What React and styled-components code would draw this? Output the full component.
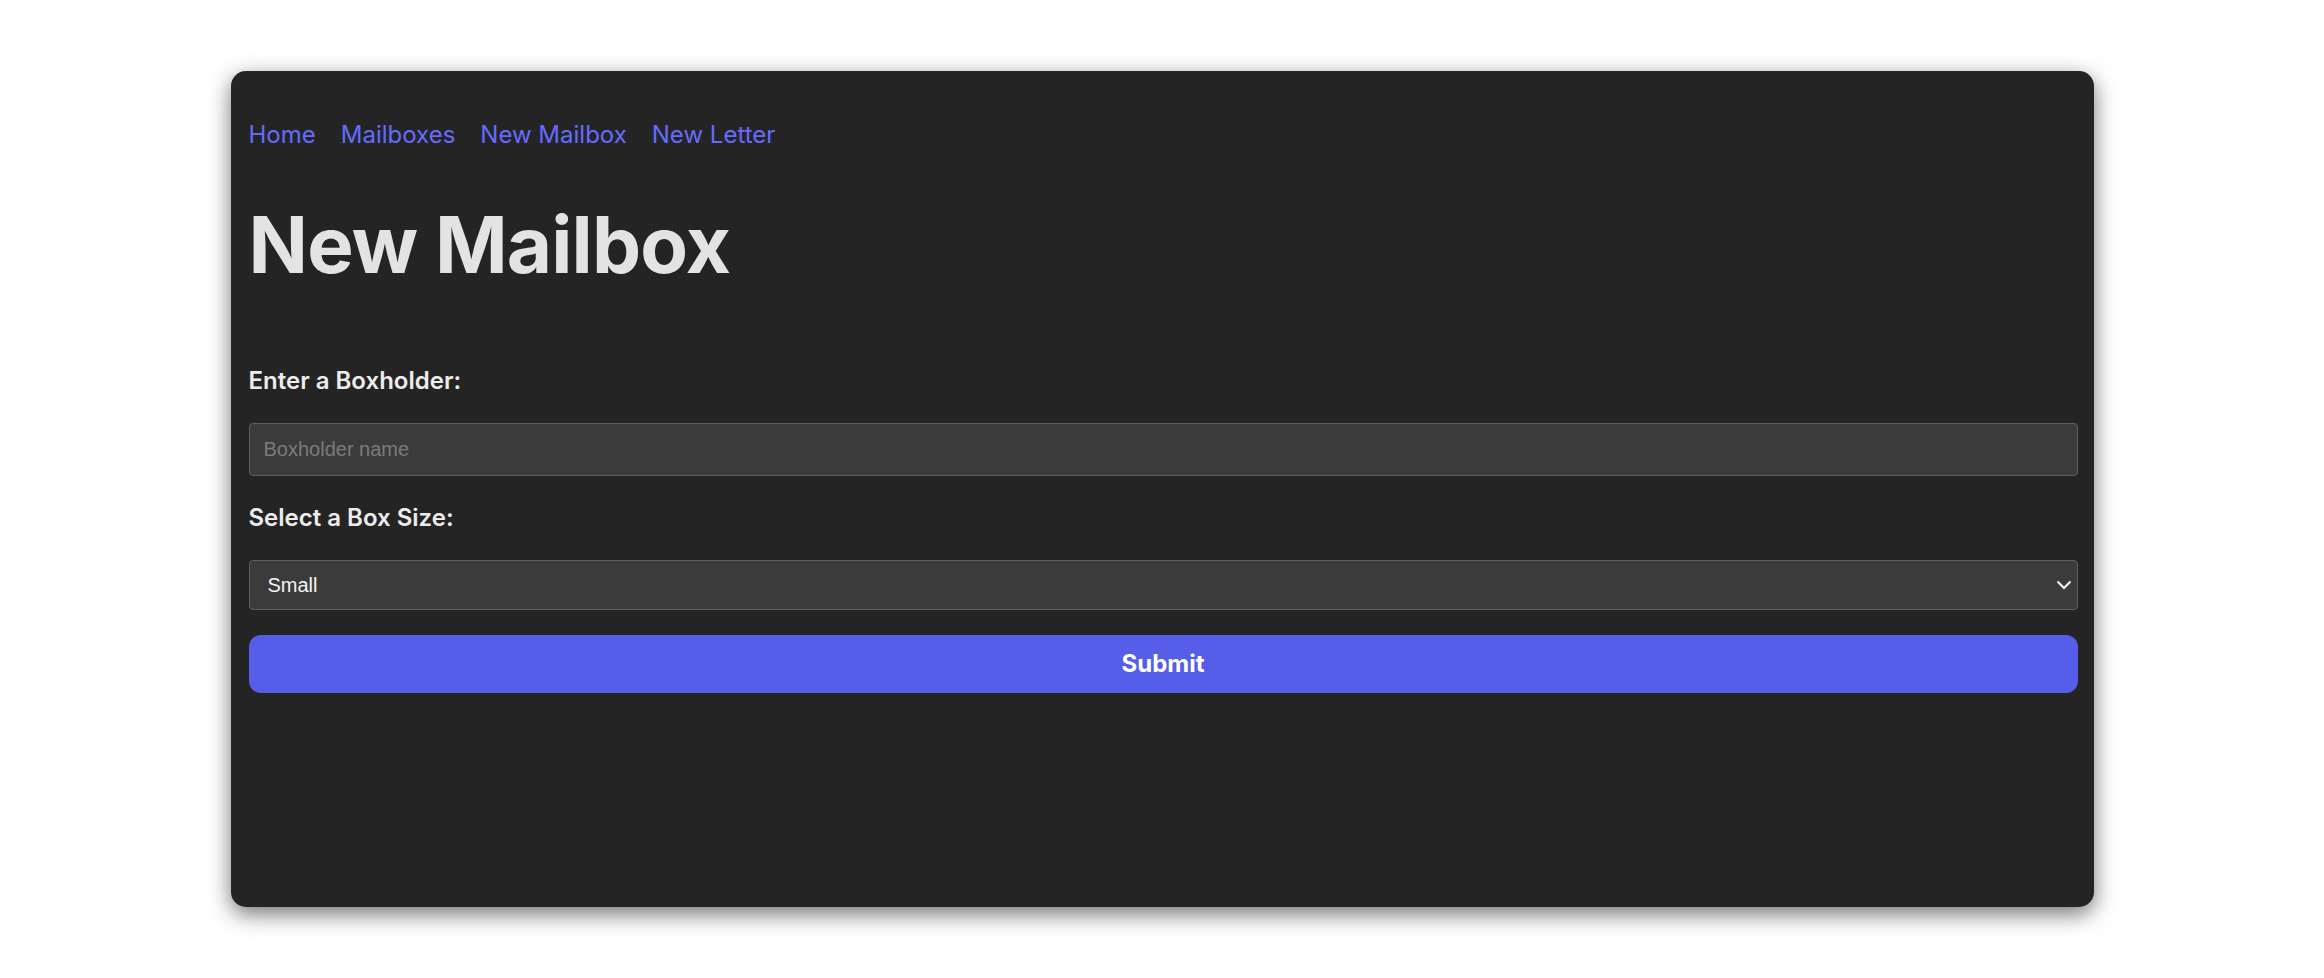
import React, { useState } from 'react';
import styled, { createGlobalStyle } from 'styled-components';

const GlobalStyle = createGlobalStyle`
  html, body {
    margin: 0;
    padding: 0;
    background: #ffffff;
  }
  #root {
    min-height: 100vh;
    display: flex;
    align-items: center;
    justify-content: center;
  }
`;

const Card = styled.div`
  box-sizing: border-box;
  width: 1863px;
  height: 836px;
  background: #242424;
  border-radius: 15px;
  box-shadow: 0 7px 22px rgba(0, 0, 0, 0.55);
  padding: 46px 16px 0 18px;
  font-family: Inter, "Noto Sans", sans-serif;
  color: rgba(255, 255, 255, 0.87);
`;

const Nav = styled.nav`
  display: flex;
  gap: 25px;
  line-height: 36px;
`;

const NavLink = styled.a`
  font-size: 24px;
  color: #646cff;
  text-decoration: none;
  cursor: pointer;
`;

const Title = styled.h1`
  margin: 49px 0 0;
  font-size: 78px;
  line-height: 1.1;
  font-weight: 700;
  color: #e3e3e3;
  letter-spacing: -0.8px;
`;

const Form = styled.form`
  margin-top: 75px;
  display: flex;
  flex-direction: column;
  gap: 24px;
`;

const Label = styled.label`
  font-size: 24px;
  line-height: 36px;
  font-weight: 600;
  color: #ececec;
`;

const TextInput = styled.input`
  box-sizing: border-box;
  height: 53px;
  width: 100%;
  padding: 0 14px;
  background: #3b3b3b;
  border: 1px solid #5f5f5f;
  border-radius: 4px;
  color: #f0f0f0;
  font-family: "Liberation Sans", Arial, sans-serif;
  font-size: 20px;
  outline: none;

  &::placeholder {
    color: #7b7b7b;
  }
`;

const SelectWrap = styled.div`
  position: relative;
`;

const Select = styled.select`
  box-sizing: border-box;
  appearance: none;
  height: 50px;
  width: 100%;
  padding: 0 40px 0 18px;
  background: #3b3b3b;
  border: 1px solid #5f5f5f;
  border-radius: 4px;
  color: #f4f4f4;
  font-family: "Liberation Sans", Arial, sans-serif;
  font-size: 20px;
  outline: none;
`;

const Chevron = styled.svg`
  position: absolute;
  right: 6px;
  top: 50%;
  transform: translateY(-50%);
  pointer-events: none;
`;

const SubmitButton = styled.button`
  margin-top: 1px;
  height: 58px;
  width: 100%;
  border: none;
  border-radius: 12px;
  background: #555de9;
  color: #ffffff;
  font-family: Inter, "Noto Sans", sans-serif;
  font-size: 24px;
  font-weight: 700;
  cursor: pointer;
`;

const links = ['Home', 'Mailboxes', 'New Mailbox', 'New Letter'];

export default function App() {
  const [name, setName] = useState('');
  const [size, setSize] = useState('small');

  return (
    <>
      <GlobalStyle />
      <Card>
        <Nav>
          {links.map(link => (
            <NavLink key={link}>{link}</NavLink>
          ))}
        </Nav>
        <Title>New Mailbox</Title>
        <Form onSubmit={e => e.preventDefault()}>
          <Label htmlFor="boxholder">Enter a Boxholder:</Label>
          <TextInput
            id="boxholder"
            placeholder="Boxholder name"
            value={name}
            onChange={e => setName(e.target.value)}
          />
          <Label htmlFor="boxsize">Select a Box Size:</Label>
          <SelectWrap>
            <Select id="boxsize" value={size} onChange={e => setSize(e.target.value)}>
              <option value="small">Small</option>
              <option value="medium">Medium</option>
              <option value="large">Large</option>
            </Select>
            <Chevron width="16" height="10" viewBox="0 0 16 10">
              <path d="M1.5 1.5 L8 8 L14.5 1.5" fill="none" stroke="#ffffff" strokeWidth="2" />
            </Chevron>
          </SelectWrap>
          <SubmitButton type="submit">Submit</SubmitButton>
        </Form>
      </Card>
    </>
  );
}
